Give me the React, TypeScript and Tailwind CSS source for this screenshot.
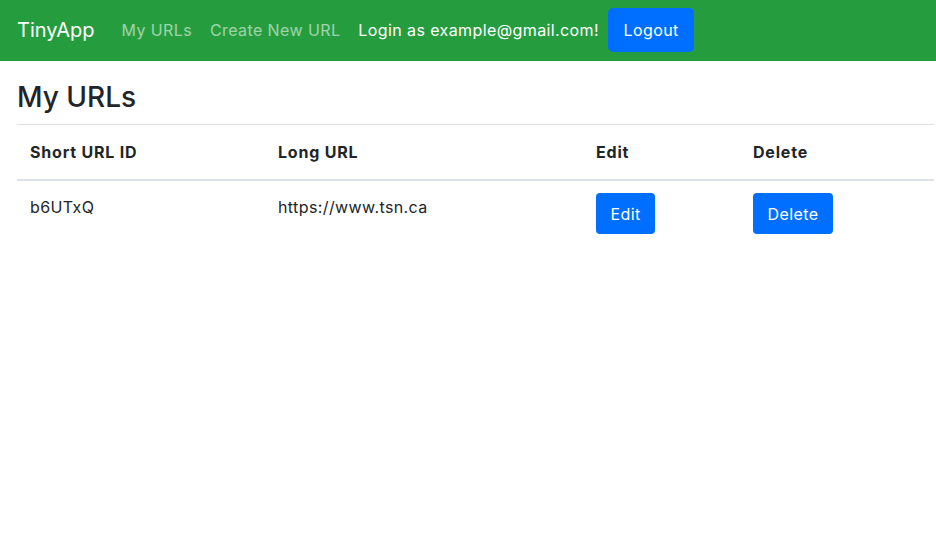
export default function App() {
  const rows = [{ id: 'b6UTxQ', url: 'https://www.tsn.ca' }];

  return (
    <div className="min-h-screen bg-white text-[#212529]" style={{ fontFamily: 'Inter, "Noto Sans", sans-serif' }}>
      <nav className="h-[61px] bg-[#259d3e] flex items-start px-[17px]">
        <a href="#" className="mt-[16px] text-[20px] leading-[28px] text-white mr-[27px]">TinyApp</a>
        <div className="mt-[18px] flex items-center gap-[18px] text-[16px] leading-[24px] tracking-[0.4px]">
          <a href="#" className="text-white/55">My URLs</a>
          <a href="#" className="text-white/55">Create New URL</a>
          <span className="text-white">Login as example@gmail.com!</span>
        </div>
        <button className="mt-[8px] ml-[9px] h-[44px] px-[15.5px] rounded-[5px] bg-[#006fff] text-white text-[16px] tracking-[0.4px]">
          Logout
        </button>
      </nav>

      <main className="pl-[17px] pr-[2px] pt-[20px]">
        <h3 className="text-[28px] font-medium leading-[1.2] mb-[9px]">My URLs</h3>
        <table className="w-full border-collapse text-[16px] text-left">
          <thead>
            <tr className="border-t border-[#dee2e6] border-b-2 tracking-[0.8px]">
              <th className="w-[248px] h-[56px] px-[13px] font-bold">Short URL ID</th>
              <th className="w-[318px] px-[13px] font-bold">Long URL</th>
              <th className="w-[157px] px-[13px] font-bold">Edit</th>
              <th className="px-[13px] font-bold">Delete</th>
            </tr>
          </thead>
          <tbody className="tracking-[0.4px]">
            {rows.map((r) => (
              <tr key={r.id}>
                <td className="px-[13px] pt-[12px] pb-[12px] align-top leading-[24px]">
                  <div className="pt-[2px]">{r.id}</div>
                </td>
                <td className="px-[13px] pt-[12px] pb-[12px] align-top leading-[24px]">
                  <div className="pt-[2px]">{r.url}</div>
                </td>
                <td className="px-[13px] pt-[12px] pb-[12px] align-top">
                  <button className="h-[41px] px-[14.5px] rounded-[4px] bg-[#006fff] text-white text-[16px]">Edit</button>
                </td>
                <td className="px-[13px] pt-[12px] pb-[12px] align-top">
                  <button className="h-[41px] px-[14.5px] rounded-[4px] bg-[#006fff] text-white text-[16px]">Delete</button>
                </td>
              </tr>
            ))}
          </tbody>
        </table>
      </main>
    </div>
  );
}
